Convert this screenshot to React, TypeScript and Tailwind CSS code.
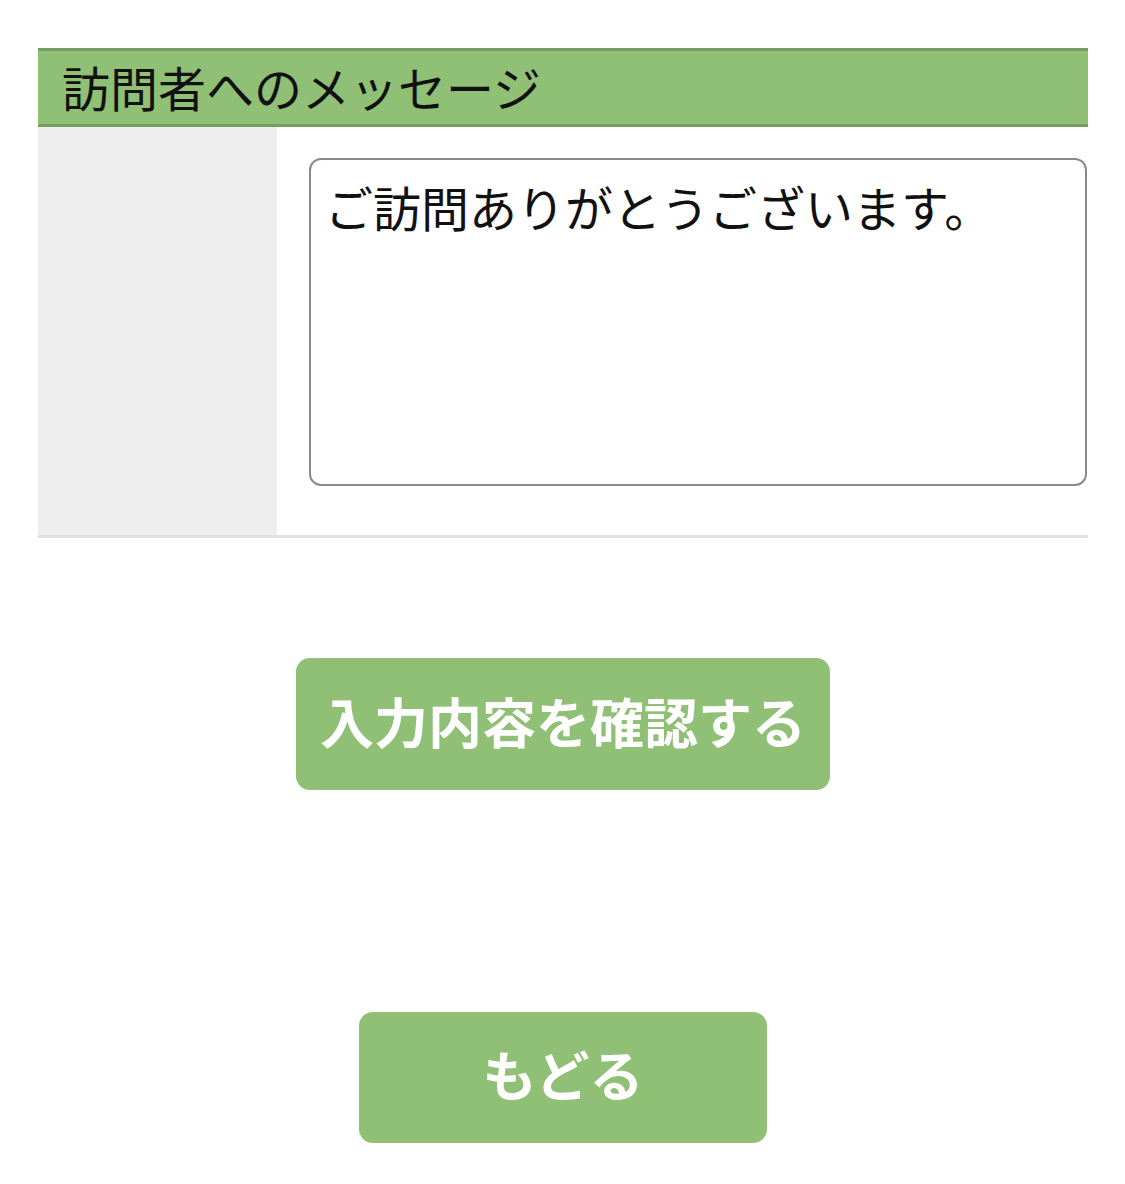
export default function App() {
  const jp = "font-['Hiragino_Sans','Noto_Sans_CJK_JP',sans-serif]";

  return (
    <div className={`${jp} min-h-[1184px] bg-white pt-[48px] pl-[38px] pr-[37px] text-[#111]`}>
      {/* Section heading */}
      <div className="flex h-[79px] items-center border-y-[3px] border-[#779b60] bg-[#8fc075] pb-[3px] pl-[24px]">
        <h2 className="text-[48px] leading-none font-normal">訪問者へのメッセージ</h2>
      </div>

      {/* Form row */}
      <div className="flex border-b-[3px] border-[#e1e1e1]">
        <div className="w-[239px] shrink-0 bg-[#eeeeee]" />
        <div className="flex-1 pt-[31px] pb-[49px] pl-[32px] pr-[1px]">
          <textarea
            className={`${jp} block h-[328px] w-full resize-none rounded-[12px] border-2 border-[#8a8a8a] bg-white px-[14px] py-[10px] text-[48px] leading-[1.5] text-[#111] outline-none`}
            defaultValue="ご訪問ありがとうございます。"
          />
        </div>
      </div>

      {/* Actions */}
      <div className="flex flex-col items-center pt-[120px]">
        <button className="flex h-[132px] w-[534px] items-center justify-center rounded-[14px] bg-[#8fc075] pb-[8px] text-[54px] font-bold text-white">
          入力内容を確認する
        </button>
        <button className="mt-[222px] flex h-[131px] w-[408px] items-center justify-center rounded-[14px] bg-[#8fc075] pb-[8px] text-[54px] font-bold text-white">
          もどる
        </button>
      </div>
    </div>
  );
}
